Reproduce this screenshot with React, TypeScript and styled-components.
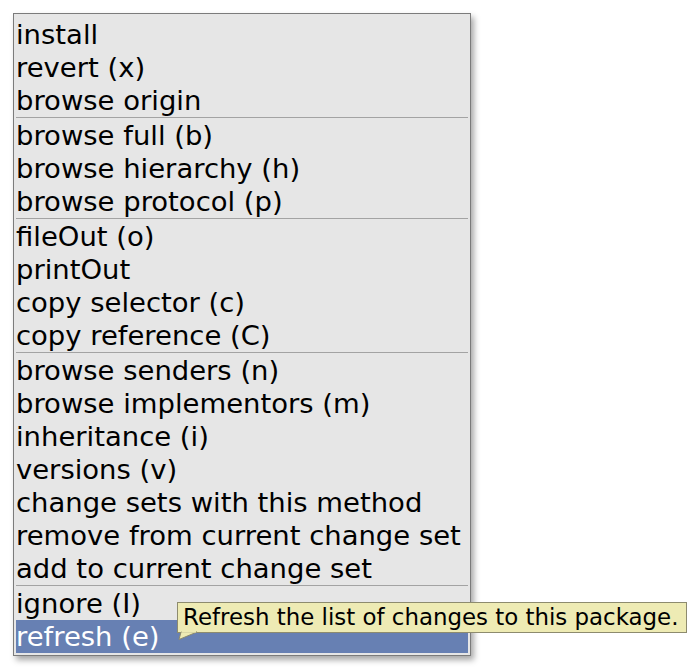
import React from 'react';
import styled, { createGlobalStyle } from 'styled-components';

const GlobalStyle = createGlobalStyle`
  html, body {
    margin: 0;
    padding: 0;
    background: #ffffff;
  }
  body {
    font-family: "DejaVu Sans", "Noto Sans", sans-serif;
  }
`;

const Page = styled.div`
  position: relative;
  width: 688px;
  height: 667px;
  overflow: hidden;
`;

const Menu = styled.div`
  margin: 13px 0 0 13px;
  width: 452px;
  padding: 4px 2px 2px 2px;
  background: #e6e6e6;
  border: 1px solid #7b7b7b;
  box-shadow: 3px 4px 6px rgba(0, 0, 0, 0.35);
  display: flex;
  flex-direction: column;
`;

const Item = styled.div<{ $active?: boolean }>`
  height: 33px;
  line-height: 33px;
  padding-left: 0;
  font-size: 27.45px;
  white-space: nowrap;
  color: ${(p) => (p.$active ? '#ffffff' : '#000000')};
  background: ${(p) => (p.$active ? '#6780b3' : 'transparent')};
`;

const Separator = styled.div`
  height: 1px;
  margin-bottom: 1px;
  background: #a3a3a3;
`;

const Tooltip = styled.div`
  position: absolute;
  left: 177px;
  top: 602px;
  height: 29px;
  padding: 0 8px 0 5px;
  background: #eeebb4;
  border: 1px solid #8d8b6e;
  font-size: 22.9px;
  line-height: 29px;
  color: #000000;
  white-space: nowrap;
`;

const Tail = styled.svg`
  position: absolute;
  left: 176px;
  top: 630px;
  overflow: visible;
`;

const groups: string[][] = [
  ['install', 'revert (x)', 'browse origin'],
  ['browse full (b)', 'browse hierarchy (h)', 'browse protocol (p)'],
  ['fileOut (o)', 'printOut', 'copy selector (c)', 'copy reference (C)'],
  [
    'browse senders (n)',
    'browse implementors (m)',
    'inheritance (i)',
    'versions (v)',
    'change sets with this method',
    'remove from current change set',
    'add to current change set',
  ],
  ['ignore (I)', 'refresh (e)'],
];

export default function App() {
  const active = 'refresh (e)';
  return (
    <Page>
      <GlobalStyle />
      <Menu>
        {groups.map((group, gi) => (
          <React.Fragment key={gi}>
            {gi > 0 && <Separator />}
            {group.map((label) => (
              <Item key={label} $active={label === active}>
                {label}
              </Item>
            ))}
          </React.Fragment>
        ))}
      </Menu>
      <Tooltip>Refresh the list of changes to this package.</Tooltip>
      <Tail width="24" height="12" viewBox="0 0 24 12">
        <polygon points="5,2 3,9.5 21,2" fill="#eeebb4" stroke="#8d8b6e" strokeWidth="1" />
        <rect x="5.6" y="1" width="14.5" height="1.6" fill="#eeebb4" />
      </Tail>
    </Page>
  );
}
